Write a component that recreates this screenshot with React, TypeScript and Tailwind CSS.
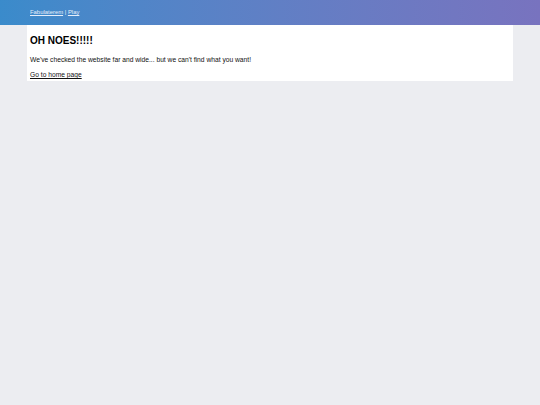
export default function App() {
  return (
    <div className="min-h-[405px] bg-[#ecedf1] font-['Liberation_Sans',Arial,sans-serif] text-black">
      <header className="h-[25px] bg-gradient-to-r from-[#3a8bcb] to-[#7873bf] px-[30px] flex items-center">
        <nav className="text-[5.9px] text-[#e6eefa]">
          <a href="#" className="underline">Fabulaterem</a>
          <span> | </span>
          <a href="#" className="underline">Play</a>
        </nav>
      </header>
      <main className="mx-[27px] w-[486px] bg-white px-[3px] pt-[10px] pb-[2px]">
        <h1 className="text-[10px] font-bold leading-[12px] mb-[8px]">OH NOES!!!!!</h1>
        <p className="text-[6.7px] leading-[9px] mb-[6px] text-[#111]">
          We've checked the website far and wide... but we can't find what you want!
        </p>
        <a href="#" className="text-[6.7px] leading-[9px] underline block text-[#111]">Go to home page</a>
      </main>
    </div>
  );
}
